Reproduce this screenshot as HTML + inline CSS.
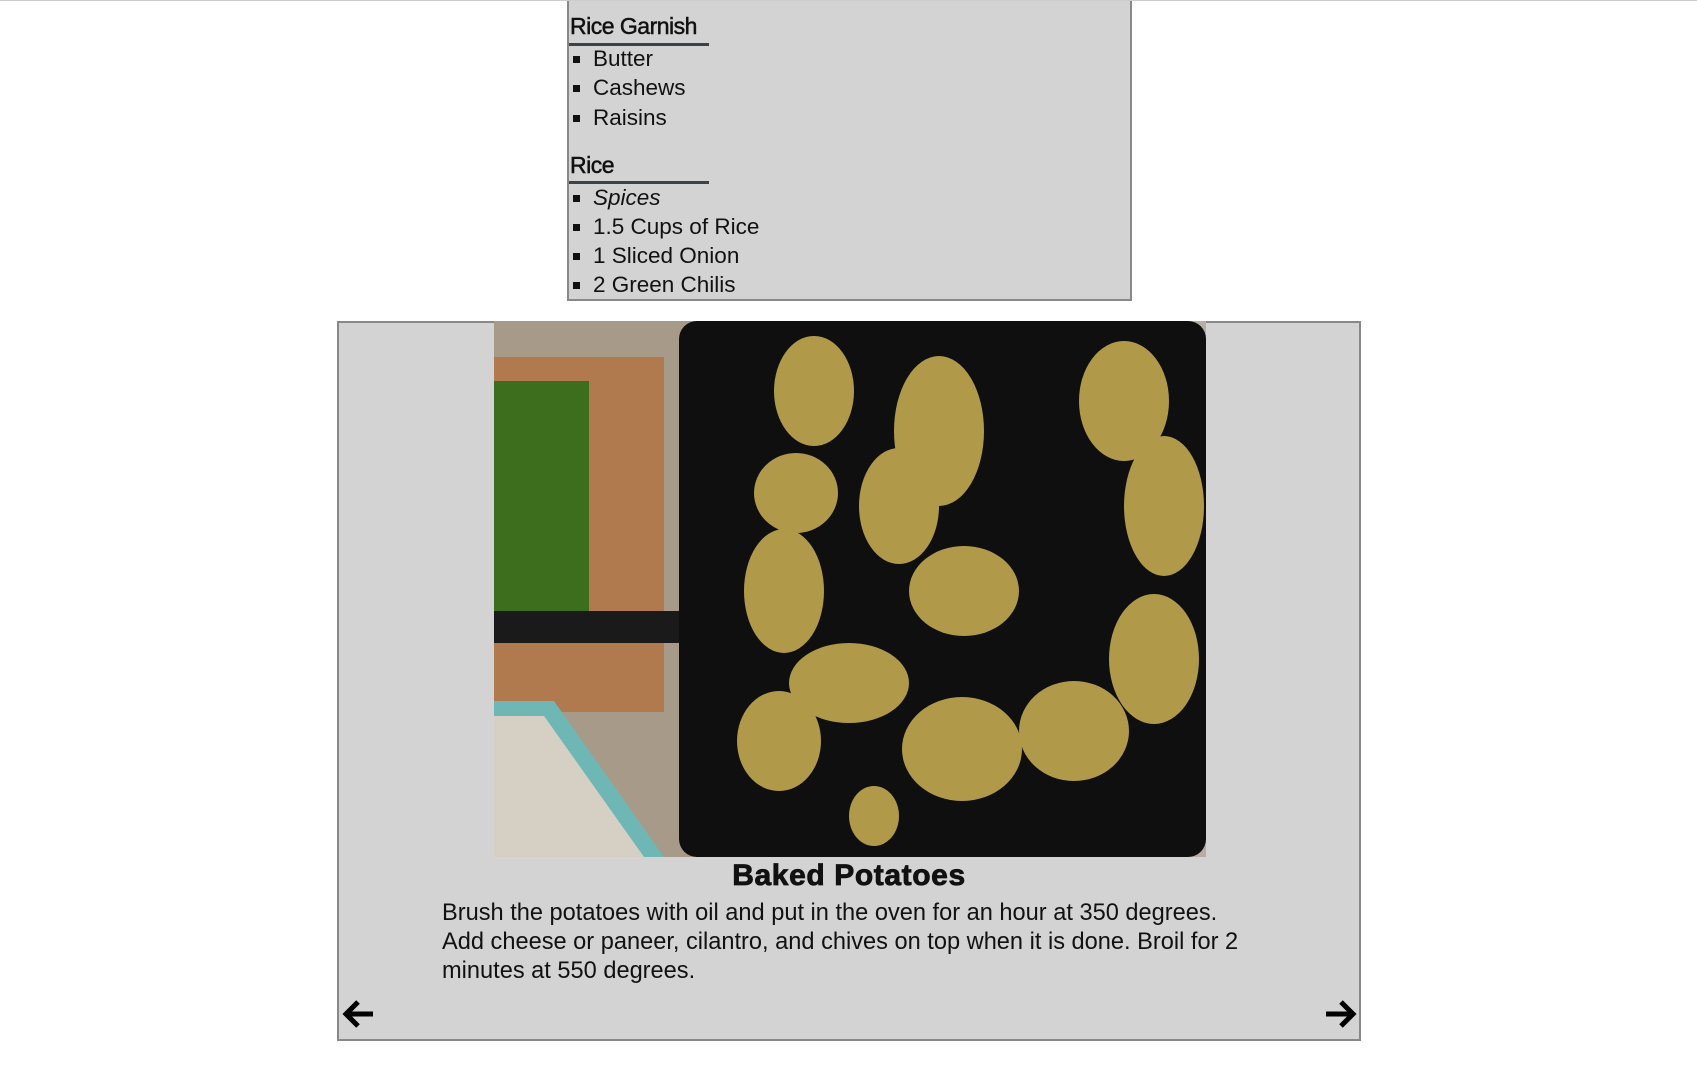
<!DOCTYPE html>
<html><head><meta charset="utf-8"><style>
body{margin:0;width:1697px;height:1071px;background:#fff;position:relative;overflow:hidden;font-family:"Liberation Sans",sans-serif;color:#111}
.topline{position:absolute;left:0;top:0;width:1697px;height:1px;background:#ccc}
.box1{position:absolute;left:567px;top:1px;width:565px;height:300px;background:#d3d3d3;border:2px solid #888;border-top:none;box-sizing:border-box}
h3{position:absolute;margin:0;font-size:23px;font-weight:normal;letter-spacing:-0.5px;left:1px;-webkit-text-stroke:0.5px #111}
.ul{position:absolute;left:0;top:42px;width:140px;height:3px;background:#3a434b}
.li{position:absolute;left:24px;font-size:22.5px;line-height:29px;white-space:nowrap}
.li:before{content:"";position:absolute;left:-20px;top:12px;width:7px;height:7px;background:#111}
.box2{position:absolute;left:337px;top:321px;width:1024px;height:720px;background:#d3d3d3;border:2px solid #888;box-sizing:border-box}
.title{position:absolute;left:0;width:1020px;top:536px;text-align:center;font-size:30px;font-weight:bold;letter-spacing:0.6px;-webkit-text-stroke:0.8px #111}
.para{position:absolute;left:103px;top:576px;font-size:23.6px;line-height:29px;white-space:nowrap}
.arr{position:absolute;top:673px}
</style></head><body>
<div class="topline"></div>
<div class="box1">
 <h3 style="top:12px">Rice Garnish</h3><div class="ul"></div>
 <div class="li" style="top:43px">Butter</div>
 <div class="li" style="top:72px">Cashews</div>
 <div class="li" style="top:102px">Raisins</div>
 <h3 style="top:151px">Rice</h3><div class="ul" style="top:180px"></div>
 <div class="li" style="top:182px;font-style:italic">Spices</div>
 <div class="li" style="top:211px">1.5 Cups of Rice</div>
 <div class="li" style="top:240px">1 Sliced Onion</div>
 <div class="li" style="top:269px">2 Green Chilis</div>
</div>
<div class="box2">
 <svg style="position:absolute;left:155px;top:-2px" width="712" height="536" viewBox="0 0 712 536">
  <rect width="712" height="536" fill="#b7ada0"/>
  <rect x="0" y="0" width="220" height="536" fill="#a89a88"/>
  <rect x="0" y="36" width="170" height="355" fill="#b07a4e"/>
  <rect x="0" y="60" width="95" height="240" fill="#3d6e1e"/>
  <rect x="0" y="290" width="195" height="32" fill="#1a1a1a"/>
  <polygon points="0,380 60,380 170,536 0,536" fill="#6fb7b4"/>
  <polygon points="0,395 50,395 150,536 0,536" fill="#d6d0c4"/>
  <rect x="185" y="0" width="527" height="536" rx="18" fill="#0f0f0f"/>
  <g fill="#b09a4a">
   <ellipse cx="320" cy="70" rx="40" ry="55"/><ellipse cx="445" cy="110" rx="45" ry="75"/>
   <ellipse cx="630" cy="80" rx="45" ry="60"/><ellipse cx="302" cy="172" rx="42" ry="40"/>
   <ellipse cx="405" cy="185" rx="40" ry="58"/><ellipse cx="670" cy="185" rx="40" ry="70"/>
   <ellipse cx="290" cy="270" rx="40" ry="62"/><ellipse cx="470" cy="270" rx="55" ry="45"/>
   <ellipse cx="660" cy="338" rx="45" ry="65"/><ellipse cx="355" cy="362" rx="60" ry="40"/>
   <ellipse cx="580" cy="410" rx="55" ry="50"/><ellipse cx="285" cy="420" rx="42" ry="50"/>
   <ellipse cx="468" cy="428" rx="60" ry="52"/><ellipse cx="380" cy="495" rx="25" ry="30"/>
  </g>
 </svg>
 <div class="title">Baked Potatoes</div>
 <div class="para">Brush the potatoes with oil and put in the oven for an hour at 350 degrees.<br>Add cheese or paneer, cilantro, and chives on top when it is done. Broil for 2<br>minutes at 550 degrees.</div>
 <svg class="arr" style="left:2px" width="36" height="36" viewBox="0 0 36 36"><path d="M32 18H6M17 6L5 18l12 12" stroke="#000" stroke-width="5" fill="none"/></svg>
 <svg class="arr" style="left:983px" width="36" height="36" viewBox="0 0 36 36"><path d="M4 18h26M19 6l12 12-12 12" stroke="#000" stroke-width="5" fill="none"/></svg>
</div>
</body></html>
